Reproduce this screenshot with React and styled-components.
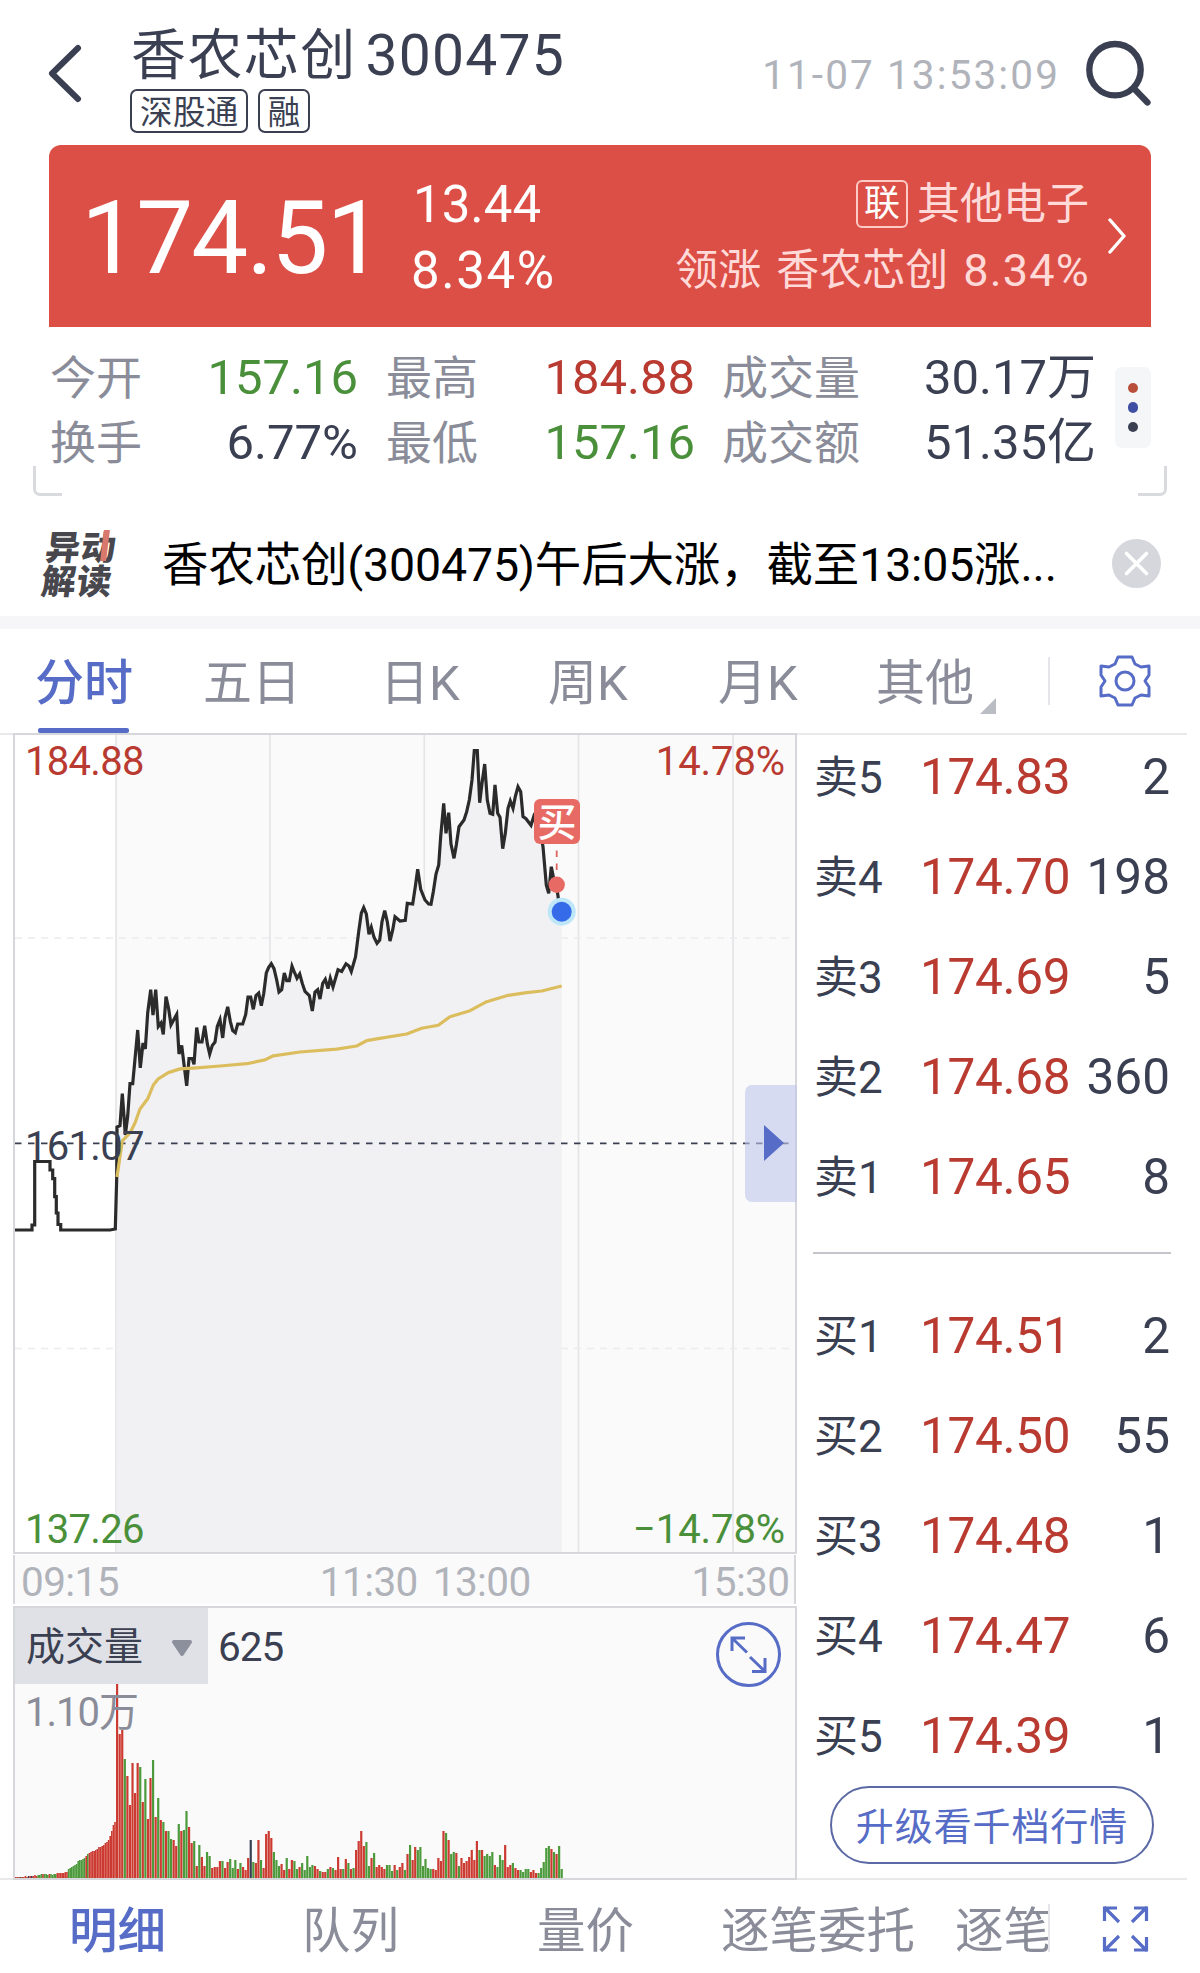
import styled, { createGlobalStyle } from "styled-components";

const GlobalStyle = createGlobalStyle`
  * {
    box-sizing: border-box;
  }
  body {
    margin: 0;
    background: #fff;
    font-family: Roboto, "Noto Sans CJK SC", sans-serif;
    color: #3a3f52;
  }
  svg {
    display: block;
  }
`;

const colors = {
  dark: "#3a3f52",
  grey: "#8a8d99",
  light: "#b1b3bb",
  red: "#b93a30",
  green: "#4a8f3a",
  blue: "#566cc6",
};

const Page = styled.div`
  width: 1200px;
  height: 1973px;
  overflow: hidden;
  background: #fff;
  line-height: 1;
  white-space: nowrap;
`;

/* ---------- header ---------- */

const TopBar = styled.header`
  display: flex;
  height: 145px;
  padding-right: 45px;
`;

const BackButton = styled.div`
  width: 131px;
  padding: 40px 0 0 43px;
`;

const Heading = styled.div`
  flex: 1;
  padding-top: 25px;
`;

const StockTitle = styled.h1`
  display: flex;
  align-items: center;
  gap: 9px;
  height: 60px;
  margin: 0 0 4px;
  font-size: 55px;
  font-weight: 400;
  letter-spacing: 1.4px;
`;

const StockCode = styled.span`
  font-size: 57px;
  letter-spacing: 1.2px;
`;

const TagRow = styled.div`
  display: flex;
  gap: 10px;
  margin-left: -1px;
`;

const Tag = styled.span`
  display: flex;
  align-items: center;
  justify-content: center;
  height: 44px;
  padding: 4px 7px 0 8px;
  border: 2px solid ${colors.dark};
  border-radius: 7px;
  font-size: 32.5px;
  letter-spacing: 0.4px;
`;

const Clock = styled.span`
  padding-top: 55px;
  margin-right: 25px;
  color: ${colors.light};
  font-size: 40.5px;
  letter-spacing: 2.1px;
`;

const SearchButton = styled.div`
  padding-top: 38px;
`;

/* ---------- price card ---------- */

const PriceCard = styled.section`
  display: flex;
  align-items: center;
  height: 182px;
  margin: 0 49px;
  padding: 0 25px 0 32px;
  border-radius: 12px 12px 0 0;
  background: #dc4f47;
  color: #fff;
`;

const LastPrice = styled.span`
  width: 330px;
  padding-top: 5px;
  font-size: 101.5px;
  letter-spacing: -1.9px;
`;

const Change = styled.div`
  display: flex;
  flex-direction: column;
  gap: 15px;
  flex: 1;
  padding-top: 3px;
  font-size: 51px;

  span:first-child {
    padding-left: 2px;
  }
  span:last-child {
    letter-spacing: 1.6px;
  }
`;

const Sector = styled.div`
  display: flex;
  flex-direction: column;
  align-items: flex-end;
  gap: 18px;
  margin-right: 19px;
  padding-top: 1px;
  color: #ffdad8;
  font-size: 43px;
`;

const SectorName = styled.div`
  display: flex;
  align-items: center;
  gap: 9px;
  height: 46px;
`;

const SectorBadge = styled.span`
  display: flex;
  align-items: center;
  justify-content: center;
  width: 52px;
  height: 48px;
  margin-top: -2px;
  border: 2px solid #ffc9c5;
  border-radius: 6px;
  color: #fff;
  font-size: 36px;
`;

const Leader = styled.div`
  display: flex;
  gap: 15px;
  padding-top: 3px;
`;

const LeaderChange = styled.span`
  font-size: 45px;
  line-height: 43px;
  letter-spacing: 1.2px;
  margin-right: -1px;
`;

/* ---------- stats ---------- */

const Stats = styled.section`
  display: flex;
  justify-content: space-between;
  height: 139px;
  padding: 0 49px 0 50px;
`;

const StatGrid = styled.div`
  display: grid;
  grid-template-columns: 92px 216px 28px 92px 217px 27px 140px 234px;
  grid-auto-rows: 65px;
  align-items: center;
  padding-top: 18px;
`;

const StatLabel = styled.span`
  color: ${colors.grey};
  font-size: 46px;
`;

const StatValue = styled.span`
  color: ${(p) => colors[p.$color]};
  font-size: 49px;
  text-align: right;
`;

const MoreButton = styled.div`
  display: flex;
  flex-direction: column;
  align-items: center;
  justify-content: center;
  gap: 9px;
  width: 36px;
  height: 81px;
  margin-top: 40px;
  border-radius: 7px;
  background: #f5f6f8;
`;

const Dot = styled.i`
  width: 10.5px;
  height: 10.5px;
  border-radius: 50%;
  background: ${(p) => p.$color};
`;

const Brackets = styled.div`
  display: flex;
  justify-content: space-between;
  height: 30px;
  padding: 0 33px;
`;

const Bracket = styled.span`
  width: 29px;
  height: 30px;
  border: 3px solid #d9dade;
  border-top: 0;
  ${(p) => (p.$right ? "border-left: 0;" : "border-right: 0;")}
  border-radius: ${(p) => (p.$right ? "0 0 7px 0" : "0 0 0 7px")};
`;

/* ---------- news ---------- */

const NewsBar = styled.section`
  display: flex;
  align-items: center;
  height: 120px;
  padding: 15px 39px 0 44px;
`;

const NewsLogo = styled.div`
  position: relative;
  width: 118px;
  margin-top: -4px;
  color: #47474d;
  font: 900 34.5px/34px "Noto Sans CJK SC", sans-serif;
  letter-spacing: 1px;
  transform: skewX(-7deg);
`;

const LogoStroke = styled.i`
  position: absolute;
  left: 56px;
  top: 2px;
  width: 6px;
  height: 31px;
  background: #d9786c;
`;

const NewsText = styled.p`
  flex: 1;
  margin: 0;
  padding-top: 4px;
  color: #000;
  font-size: 46.5px;
  letter-spacing: -0.17px;
`;

const Band = styled.div`
  height: 13px;
  background: #f6f6f8;
`;

/* ---------- chart tabs ---------- */

const ChartTabs = styled.nav`
  display: flex;
  height: 104px;
  padding-left: 35px;
  font-size: 49px;
`;

const ChartTab = styled.div`
  position: relative;
  width: ${(p) => p.$width}px;
  padding-top: 30px;
  color: ${(p) => (p.$active ? colors.blue : colors.grey)};
  font-weight: ${(p) => (p.$active ? 500 : 400)};
`;

const Underline = styled.i`
  position: absolute;
  left: 3px;
  bottom: 0;
  width: 91px;
  height: 5px;
  border-radius: 2px;
  background: ${colors.blue};
`;

const Corner = styled.svg`
  position: absolute;
  left: 104px;
  top: 69px;
`;

const TabDivider = styled.i`
  width: 2px;
  height: 48px;
  margin: 28px 48px 0 0;
  background: #e6e6ea;
`;

const GearButton = styled.div`
  padding-top: 25px;
`;

/* ---------- main area ---------- */

const Main = styled.section`
  display: flex;
  width: 1187px;
  height: 1147px;
  border-top: 2px solid #e9e9eb;
  border-bottom: 2px solid #e9e9eb;
`;

const ChartColumn = styled.div`
  width: 784px;
  height: 1147px;
  margin: -2px 0 0 13px;
`;

const PricePanel = styled.div`
  position: relative;
  height: 821px;
  border: 2px solid #d6d7da;
  background: #fafafa;
`;

const AxisLabel = styled.span`
  position: absolute;
  top: ${(p) => p.$top}px;
  ${(p) => (p.$right ? "right: 10px;" : "left: 10px;")}
  color: ${(p) => colors[p.$color]};
  font-size: 40px;
  letter-spacing: ${(p) => (p.$right ? "-0.1px" : "-0.7px")};
`;

const BuyMark = styled.span`
  position: absolute;
  left: 519px;
  top: 64px;
  width: 46px;
  height: 45px;
  border-radius: 6px;
  background: #e86a64;
  color: #fff;
  font-size: 39px;
  font-weight: 500;
  line-height: 48px;
  text-align: center;
`;

const SideHandle = styled.div`
  position: absolute;
  right: -2px;
  top: 350px;
  width: 52px;
  height: 117px;
  padding: 40px 0 0 19px;
  border-radius: 7px 0 0 7px;
  background: rgba(190, 199, 236, 0.6);
`;

const TimeAxis = styled.div`
  display: flex;
  align-items: center;
  height: 49px;
  margin: 1px 1px 2px 0;
  padding: 6px 5px 0 6px;
  border: solid #d6d7da;
  border-width: 0 2px;
  background: #fafafa;
  color: ${colors.light};
  font-size: 40.5px;
  letter-spacing: -0.6px;
`;

const Time = styled.span`
  margin-left: ${(p) => p.$gap || 0}px;
`;

const VolumePanel = styled.div`
  position: relative;
  height: 274px;
  border: 2px solid #d6d7da;
  background: #fafafa;
`;

const VolumeHead = styled.div`
  display: flex;
  align-items: center;
  height: 76px;
`;

const VolumeSelect = styled.div`
  display: flex;
  align-items: center;
  gap: 28px;
  width: 193px;
  height: 76px;
  margin-right: 10px;
  padding: 3px 0 0 11px;
  background: #e0e1e6;
  font-size: 39px;
`;

const VolumeValue = styled.span`
  padding-top: 2px;
  font-size: 40.5px;
  letter-spacing: -1px;
`;

const VolumeMax = styled.span`
  position: absolute;
  left: 10px;
  top: 85px;
  color: ${colors.grey};
  font-size: 40px;
  letter-spacing: -1px;
`;

const ExpandButton = styled.svg`
  position: absolute;
  left: 700px;
  top: 13px;
`;

/* ---------- order book ---------- */

const OrderBook = styled.div`
  flex: 1;
  padding: 0 16px 0 16px;
`;

const OrderList = styled.div`
  padding: ${(p) => (p.$buy ? "33px 0 0" : "0 0 24px")};
  border-bottom: ${(p) => (p.$buy ? "0" : "2px solid #c5c6cc")};
  margin-top: ${(p) => (p.$buy ? "0" : "-7px")};
`;

const OrderRow = styled.div`
  display: grid;
  grid-template-columns: 106px 150px 1fr;
  align-items: center;
  height: 100px;
  padding: 0 1px 0 1px;
  font-size: 49.5px;
`;

const OrderLabel = styled.span`
  font-size: 44px;
`;

const OrderPrice = styled.span`
  color: ${colors.red};
  letter-spacing: -0.3px;
`;

const OrderQty = styled.span`
  text-align: right;
`;

const Upgrade = styled.button`
  display: block;
  width: 324px;
  height: 78px;
  margin: -1px 0 0 17px;
  padding: 3px 0 0;
  border: 2px solid #5b69a4;
  border-radius: 39px;
  background: #fff;
  color: ${colors.blue};
  font: 400 38px/1 Roboto, "Noto Sans CJK SC", sans-serif;
  letter-spacing: 0.9px;
`;

/* ---------- bottom tabs ---------- */

const BottomTabs = styled.nav`
  display: flex;
  height: 93px;
`;

const TabStrip = styled.div`
  display: flex;
  width: 1048px;
  height: 93px;
  padding-left: 69px;
  overflow: hidden;
  font-size: 48.5px;
  line-height: 104px;
`;

const StripEdge = styled.i`
  width: 2px;
  height: 48px;
  margin: 24px 52px 0 0;
  background: #e6e6ea;
`;

const BottomTab = styled.span`
  flex: none;
  height: 93px;
  width: ${(p) => p.$width}px;
  color: ${(p) => (p.$active ? colors.blue : colors.grey)};
  font-weight: ${(p) => (p.$active ? 500 : 400)};
`;

const FullScreen = styled.svg`
  margin-top: 25px;
`;

const stats = [
  ["今开", "157.16", "green"],
  ["最高", "184.88", "red"],
  ["成交量", "30.17万", "dark"],
  ["换手", "6.77%", "dark"],
  ["最低", "157.16", "green"],
  ["成交额", "51.35亿", "dark"],
];

const sells = [
  ["卖5", "174.83", 2],
  ["卖4", "174.70", 198],
  ["卖3", "174.69", 5],
  ["卖2", "174.68", 360],
  ["卖1", "174.65", 8],
];

const buys = [
  ["买1", "174.51", 2],
  ["买2", "174.50", 55],
  ["买3", "174.48", 1],
  ["买4", "174.47", 6],
  ["买5", "174.39", 1],
];

// auction phase, before 09:30
const auction =
  "15,1230 32,1230 32,1225 34.7,1225 34.7,1161.5 50,1161.5 50,1170 52.7,1170 52.7,1178.7 54.7,1178.7 54.7,1196.6 56.3,1196.6 56.3,1213 58,1213 58,1224.5 60.7,1224.5 60.7,1230 110,1230 115.3,1229";

const price =
  "116.7,1178 117,1127 120,1125.7 122.3,1093.6 124,1116 125.3,1135 127.7,1116 130,1083.7 132.7,1083.7 137.7,1030 140.3,1067.8 143,1043 145.3,1049 147.7,1012.7 150.7,989.7 153,1015 155.7,989.7 158.3,1026.5 161,1023 163.3,1034.4 166,996.5 168.7,1009 171,1024.8 176.7,1014.4 179,1054 181.7,1045.4 184,1064.4 186.7,1085.8 189,1058.5 192.3,1058.5 194,1064.4 196.7,1027.5 199,1042 202,1042 204.7,1025.8 207.3,1043.7 209.7,1054 212.3,1045.4 215,1042 217.3,1026.5 220,1019.6 222.7,1037.9 225,1017.9 227.7,1006.9 230.3,1021.3 232.7,1030.6 235.3,1032.7 237.7,1024 242.7,1024 245.7,1014.4 248,997 250.7,997 253.3,1009.3 256,995.5 258.7,993 261.3,1005.8 263.7,993.8 266.3,973 268.7,967.3 271.3,963.8 274,968.6 276.7,980 279,992 281.7,989.6 284.3,973 286.7,980.7 289.3,980.7 292,966.2 294.7,973 297,978.3 299.7,974 302.3,983.4 305,991.4 309.3,995.5 312.3,1011 315,992 317.7,989.6 320,999 322.7,983.4 325.3,979.3 328,988.6 330.3,978.3 333,987 338,969.7 341.7,971.4 346,963.8 349,966 351.3,971.4 355.5,957 358.7,931.7 361.3,913.3 363.7,907.7 366.3,914 369,934.3 371.3,927.3 374,937.3 377,943.3 379.7,940 382,921.7 384.7,910.7 387.3,921.7 390,941 392.7,930 395,916.7 400,921 405.3,920.3 407.3,903.3 412.7,904 415.3,886.7 417.7,869.3 420.7,889.3 425,900 428.7,904 431,904.3 433.3,891.7 436,874 438.7,865 440.7,836.7 443.7,803.3 446,833.3 448.7,812.7 451,844 454,858.3 456.3,845 459,826.7 464,820 466.7,811.7 469.3,800 472,780 474.3,750.7 477.3,750.7 479.7,802.7 482,783.3 484.7,764 487.3,800 490,813.3 492.7,814.3 495,785 497.7,813.3 500,817.3 502.7,848.7 505.3,833.3 508,808.3 510.3,801 513,808.3 515.3,796.7 518,786.7 520.7,791.7 523,816.7 526,818.7 531,825.3 533.7,816.7 540,830 543,846.7 546.3,885 548.7,893.3 551.3,866.7 554,880 556.7,886.7 558.3,898.3 561.7,911.7";

const average =
  "117,1177 122.3,1140.8 130,1133 135,1123 140,1109 147.7,1098.8 153.3,1085 158.3,1078.8 168.3,1072.6 180,1068.9 196.7,1067.8 220,1066 246.7,1063.7 265,1059.9 273.3,1055.8 300,1052 336.7,1049.2 356.7,1046 366.7,1040.6 376.7,1038.9 406.7,1034 421.7,1028.3 438.3,1025.3 450,1016.7 470,1010.7 486.7,1001.7 508.3,995.3 526.7,992.7 541.7,991 561.7,986";

// one entry per minute: direction + bar height
const volumes =
  "r194 r144 r148 g119 r102 r73 r115 r85 r115 g111 r76 g99 r59 r100 g118 r61 g80 r58 g56 r47 g47 g39 r38 r32 g54 r47 g48 g67 r51 r35 g37 r12 g33 r21 r12 g26 g22 r10 r11 r11 r17 g17 r10 r16 g19 g10 g18 r9 g15 r11 r8 r20 k38 g16 r15 r38 g18 r10 r44 r47 r40 g26 g18 g12 r14 r8 g20 r9 r18 g17 g9 r11 g15 g8 g22 g11 g13 r12 r9 g7 r6 r6 g9 r11 g10 r8 r21 r9 g9 r19 g15 r9 g10 r28 r37 r47 r32 g36 g12 r20 g25 r11 r13 r11 r9 g13 g13 g7 r13 g8 r11 r15 g8 r24 g33 r18 r31 g28 g31 g12 g19 g10 g9 r9 r8 r20 r17 r47 g45 r38 g24 g26 r25 g12 r20 r15 r17 r21 r28 r18 r37 g28 r28 g22 g24 g22 g26 r13 g11 g23 g18 r33 r11 r13 g15 r10 r8 g8 g6 g9 g9 r6 r8 r5 g5 g10 g16 g30 g32 r29 g26 r24 g32 g9"
    .split(" ")
    .map((v) => ({ dir: v[0], height: Number(v.slice(1)) }));

const auctionVolumes =
  "r1 r1 r1 k1 r1 r1 r2 r1 k2 r2 k2 r2 r3 r2 g3 g3 g4 r4 g4 g4 g3 r4 g4 g3 g4 g4 r5 r5 r5 r5 r5 r6 r6 g9 g10 g11 g12 g13 g14 g17 g18 g18 g19 g20 r22 g24 r25 r26 r27 r27 r28 r29 r31 r31 r32 r33 r35 r36 r38 r42 r47 r53 r56"
    .split(" ")
    .map((v) => ({ dir: v[0], height: Number(v.slice(1)) }));

const barColors = { r: "#cc3b31", g: "#4c9a3c", k: "#3a3f52" };

function PriceChart() {
  return (
    <svg width="780" height="817" viewBox="15 735 780 817">
      <rect x="15" y="735" width="101" height="817" fill="#fff" />
      <g stroke="#e4e4e6" strokeWidth="1.6">
        {[116, 270, 424.3, 578.5, 733].map((x) => (
          <line key={x} x1={x} x2={x} y1="735" y2="1552" />
        ))}
      </g>
      <g stroke="#ececee" strokeWidth="1.6" strokeDasharray="7 6">
        <line x1="15" x2="795" y1="938" y2="938" />
        <line x1="15" x2="795" y1="1348.500" y2="1348.500" />
      </g>
      <polygon
        points={`116.5,1552 ${price} 561.7,1552`}
        fill="#f1f1f3"
      />
      <line
        x1="15"
        x2="795"
        y1="1143.3"
        y2="1143.3"
        stroke="#3a3f52"
        strokeWidth="1.8"
        strokeDasharray="6.5 6.5"
      />
      <polyline
        points={`${auction} ${price}`}
        fill="none"
        stroke="#2b2b2b"
        strokeWidth="3.2"
      />
      <polyline
        points={average}
        fill="none"
        stroke="#dcbd5e"
        strokeWidth="3.2"
        strokeLinejoin="round"
      />
      <line
        x1="556.7"
        x2="556.7"
        y1="850.5"
        y2="872"
        stroke="#dd6560"
        strokeWidth="1.8"
        strokeDasharray="6.5 6.5"
      />
      <circle cx="556.7" cy="884.7" r="8.2" fill="#e86a64" />
      <circle cx="561.7" cy="911.7" r="14" fill="#bde6f9" />
      <circle cx="561.7" cy="911.7" r="10" fill="#356be8" />
    </svg>
  );
}

function VolumeBars() {
  return (
    <svg width="780" height="194" viewBox="15 0 780 194">
      {auctionVolumes.map((v, i) => (
        <rect
          key={i}
          x={15 + i * 1.6}
          y={194 - v.height}
          width="1.6"
          height={v.height}
          fill={barColors[v.dir]}
        />
      ))}
      {volumes.map((v, i) => (
        <rect
          key={i}
          x={116 + i * 2.57}
          y={194 - v.height}
          width="2.2"
          height={v.height}
          fill={barColors[v.dir]}
        />
      ))}
    </svg>
  );
}

function Orders({ rows, buy }) {
  return (
    <OrderList $buy={buy}>
      {rows.map(([label, value, qty]) => (
        <OrderRow key={label}>
          <OrderLabel>{label}</OrderLabel>
          <OrderPrice>{value}</OrderPrice>
          <OrderQty>{qty}</OrderQty>
        </OrderRow>
      ))}
    </OrderList>
  );
}

const Header = () => (
  <TopBar>
    <BackButton>
      <svg width="40" height="66" fill="none" stroke={colors.dark} strokeWidth="6" strokeLinecap="round" strokeLinejoin="round">
        <path d="M35 8 L9 33.5 L35 59" />
      </svg>
    </BackButton>
    <Heading>
      <StockTitle>
        香农芯创<StockCode>300475</StockCode>
      </StockTitle>
      <TagRow>
        <Tag>深股通</Tag>
        <Tag>融</Tag>
      </TagRow>
    </Heading>
    <Clock>11-07 13:53:09</Clock>
    <SearchButton>
      <svg width="70" height="70" fill="none" stroke={colors.dark} strokeWidth="6.3" strokeLinecap="round">
        <circle cx="30" cy="31.7" r="25.7" />
        <path d="M49 50.5 L62.5 64.5" />
      </svg>
    </SearchButton>
  </TopBar>
);

const App = () => {
  return (
    <Page>
      <GlobalStyle />
      <Header />

      <PriceCard>
        <LastPrice>174.51</LastPrice>
        <Change>
          <span>13.44</span>
          <span>8.34%</span>
        </Change>
        <Sector>
          <SectorName>
            <SectorBadge>联</SectorBadge>
            其他电子
          </SectorName>
          <Leader>
            <span>领涨</span>
            <span>香农芯创</span>
            <LeaderChange>8.34%</LeaderChange>
          </Leader>
        </Sector>
        <svg width="18" height="36" fill="none" stroke="#fff" strokeWidth="3.4" strokeLinecap="round" strokeLinejoin="round">
          <path d="M2 2 L16 18 L2 34" />
        </svg>
      </PriceCard>

      <Stats>
        <StatGrid>
          {stats.map(([label, value, color], i) => [
            i % 3 ? <span key={"gap" + label} /> : null,
            <StatLabel key={label}>{label}</StatLabel>,
            <StatValue key={label + value} $color={color}>
              {value}
            </StatValue>,
          ])}
        </StatGrid>
        <MoreButton>
          <Dot $color="#b94f3b" />
          <Dot $color="#3f4fa3" />
          <Dot $color="#3a3f52" />
        </MoreButton>
      </Stats>
      <Brackets>
        <Bracket />
        <Bracket $right />
      </Brackets>

      <NewsBar>
        <NewsLogo>
          异动
          <br />
          解读
          <LogoStroke />
        </NewsLogo>
        <NewsText>香农芯创(300475)午后大涨，截至13:05涨...</NewsText>
        <svg width="49" height="49" viewBox="0 0 49 49">
          <circle cx="24.5" cy="24.5" r="24.5" fill="#d6d7dd" />
          <path d="M14.5 14.5 L34.5 34.5 M34.5 14.5 L14.5 34.5" stroke="#fff" strokeWidth="3.6" strokeLinecap="round" />
        </svg>
      </NewsBar>
      <Band />

      <ChartTabs>
        <ChartTab $active $width={168}>
          分时
          <Underline />
        </ChartTab>
        <ChartTab $width={177}>五日</ChartTab>
        <ChartTab $width={168}>日K</ChartTab>
        <ChartTab $width={170}>周K</ChartTab>
        <ChartTab $width={158}>月K</ChartTab>
        <ChartTab $width={172}>
          其他
          <Corner width="16" height="16">
            <path d="M16 0 V16 H0 Z" fill="#bbbdc5" />
          </Corner>
        </ChartTab>
        <TabDivider />
        <GearButton>
          <svg width="54" height="54" viewBox="0 0 54 54" fill="none" stroke={colors.blue} strokeWidth="3" strokeLinejoin="round">
            <path d="M20 3 H34 L37 10 L43 13 L51 12 V21 L47 27 L51 33 V42 L43 41 L37 44 L34 51 H20 L17 44 L11 41 L3 42 V33 L7 27 L3 21 V12 L11 13 L17 10 Z" />
            <circle cx="27" cy="27" r="9" />
          </svg>
        </GearButton>
      </ChartTabs>

      <Main>
        <ChartColumn>
          <PricePanel>
            <PriceChart />
            <AxisLabel $top={7} $color="red">184.88</AxisLabel>
            <AxisLabel $top={7} $color="red" $right>14.78%</AxisLabel>
            <AxisLabel $top={392} $color="dark">161.07</AxisLabel>
            <AxisLabel $top={775} $color="green">137.26</AxisLabel>
            <AxisLabel $top={775} $color="green" $right>−14.78%</AxisLabel>
            <BuyMark>买</BuyMark>
            <SideHandle>
              <svg width="20" height="36">
                <path d="M0 0 L20 18 L0 36 Z" fill={colors.blue} />
              </svg>
            </SideHandle>
          </PricePanel>
          <TimeAxis>
            <Time>09:15</Time>
            <Time $gap={201}>11:30</Time>
            <Time $gap={15}>13:00</Time>
            <Time $gap={161}>15:30</Time>
          </TimeAxis>
          <VolumePanel>
            <VolumeHead>
              <VolumeSelect>
                成交量
                <svg width="22" height="18" fill="#8c8f9c" stroke="#8c8f9c" strokeWidth="4" strokeLinejoin="round">
                  <path d="M3 3 H19 L11 15 Z" />
                </svg>
              </VolumeSelect>
              <VolumeValue>625</VolumeValue>
            </VolumeHead>
            <VolumeBars />
            <VolumeMax>1.10万</VolumeMax>
            <ExpandButton width="67" height="67" fill="none" stroke={colors.blue} strokeWidth="3">
              <circle cx="33.5" cy="33.5" r="31" />
              <path d="M32 31.5 L17 17 M30 17 H17 V30 M35 36 L50 50.5 M37 50.5 H50 V37" />
            </ExpandButton>
          </VolumePanel>
        </ChartColumn>

        <OrderBook>
          <Orders rows={sells} />
          <Orders rows={buys} buy />
          <Upgrade>升级看千档行情</Upgrade>
        </OrderBook>
      </Main>

      <BottomTabs>
        <TabStrip>
          <BottomTab $active $width={233}>明细</BottomTab>
          <BottomTab $width={235}>队列</BottomTab>
          <BottomTab $width={184}>量价</BottomTab>
          <BottomTab $width={234}>逐笔委托</BottomTab>
          <BottomTab $width={98}>逐笔</BottomTab>
        </TabStrip>
        <StripEdge />
        <FullScreen width="48" height="48" fill="none" stroke={colors.blue} strokeWidth="3.2">
          <path d="M17 17 L2 2 M15 3 H2.500 V16 M30 17 L45 2 M32 3 H44.500 V16 M17 31 L2 46 M15 45 H2.500 V32 M30 31 L45 46 M32 45 H44.500 V32" />
        </FullScreen>
      </BottomTabs>
    </Page>
  );
};

export default App;
